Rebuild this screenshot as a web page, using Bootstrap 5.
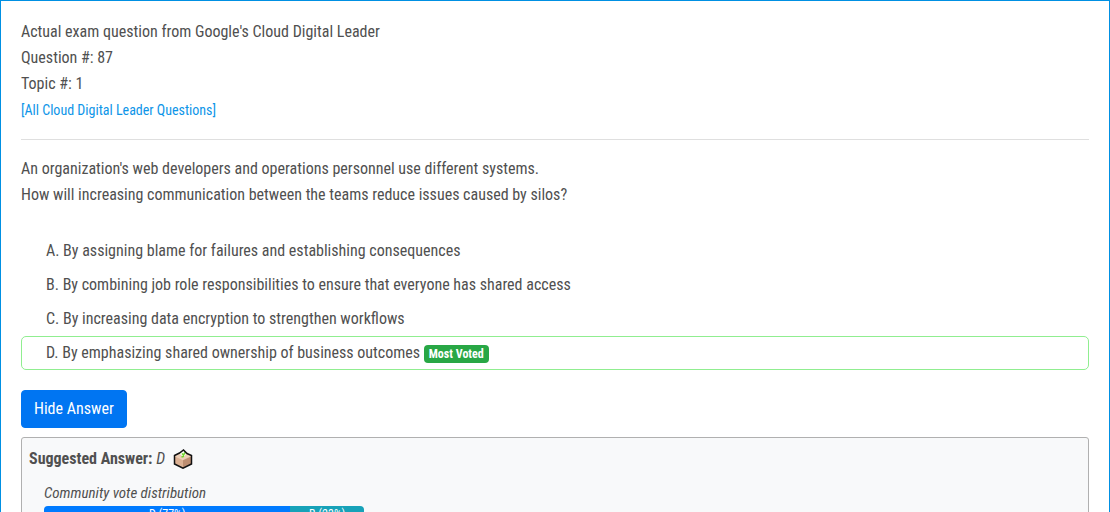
<!DOCTYPE html>
<html lang="en">
<head>
<meta charset="utf-8">
<meta name="viewport" content="width=device-width, initial-scale=1">
<title>Cloud Digital Leader – Question 87</title>
<link href="https://cdn.jsdelivr.net/npm/bootstrap@5.3.0/dist/css/bootstrap.min.css" rel="stylesheet">
<style>
  body { font-family: "Roboto Condensed", "Liberation Sans Narrow", Roboto, sans-serif; font-size: 16px; line-height: 26px; color: #505050; background: #fff; }
  .question-card { border: 1px solid #0090e3; padding: 18px 20px 20px; }
  .all-link { font-size: 14px; color: #0d95e8; text-decoration: none; }
  .divider { border-top: 1px solid #dfdfdf; margin: 16px 0; }
  .choices { margin: 26px 0 20px; }
  .choice { border: 1px solid transparent; border-radius: 5px; padding: 3px 24px; }
  .choice.voted { border-color: #90ee90; }
  .voted-badge { font-size: 12px; line-height: 12px; padding: 3px 5px; background: #28a745; border-radius: 4px; }
  .btn-answer { --bs-btn-bg: #0075f2; --bs-btn-border-color: #0075f2; --bs-btn-color: #fff; --bs-btn-hover-bg: #0069d9; --bs-btn-hover-color: #fff; --bs-btn-border-radius: 4px; line-height: 24px; }
  .answer-box { border: 1px solid #b0b0b0; border-radius: 3px; background: #f8f9fa; padding: 8px 7px; margin-top: 9px; }
  .vote-icon { width: 20px; height: 20px; margin-left: 8px; }
  .votes { width: 320px; margin: 8px 0 16px 15px; }
  .votes-title { font-size: 15px; }
  .vote-bar { --bs-progress-height: 16px; --bs-progress-font-size: 12px; --bs-progress-border-radius: 4px; }
  .bar-d { background: #007bff; }
  .bar-b { background: #17a2b8; }
</style>
</head>
<body>
<main class="question-card">
  <header>
    <div>Actual exam question from Google's Cloud Digital Leader</div>
    <div>Question #: 87</div>
    <div>Topic #: 1</div>
    <div><a class="all-link" href="#">[All Cloud Digital Leader Questions]</a></div>
  </header>
  <div class="divider"></div>
  <p class="mb-0">An organization's web developers and operations personnel use different systems.<br>How will increasing communication between the teams reduce issues caused by silos?</p>
  <ul class="list-unstyled choices">
    <li class="choice">A. By assigning blame for failures and establishing consequences</li>
    <li class="choice">B. By combining job role responsibilities to ensure that everyone has shared access</li>
    <li class="choice">C. By increasing data encryption to strengthen workflows</li>
    <li class="choice voted">D. By emphasizing shared ownership of business outcomes <span class="badge voted-badge">Most Voted</span></li>
  </ul>
  <button type="button" class="btn btn-answer">Hide Answer</button>
  <section class="answer-box">
    <div class="d-flex align-items-center"><strong>Suggested Answer:</strong>&nbsp;<em>D</em>
      <svg class="vote-icon" viewBox="0 0 20 20" aria-hidden="true">
        <path d="M1.500 6.500 6.500 4l4-3L14 4.500l4.500 2V15L10 19.200 1.500 15z" fill="#edceb6"/>
        <path d="M2 7l8 3.800V19l-8-4z" fill="#dcb193"/>
        <path d="M18 7l-8 3.800V19l8-4z" fill="#bd8e71"/>
        <path d="M6.500 4.500l4-3.300 3.300 3.300-3.500 3.800z" fill="#f8fdf0"/>
        <path d="M9 4.500l1.500 1.500L12.500 3M8.500 8l2.500-.8" stroke="#6fd52c" stroke-width="1.500" fill="none"/>
        <path d="M2 7l8 3.800L18 7" fill="none" stroke="#f3dac6" stroke-width=".6"/>
        <path d="M1.500 6.500 6.500 4l4-3L14 4.500l4.500 2V15L10 19.200 1.500 15z" fill="none" stroke="#111" stroke-width="1.500"/>
      </svg>
    </div>
    <div class="votes">
      <div class="votes-title"><em>Community vote distribution</em></div>
      <div class="progress vote-bar">
        <div class="progress-bar bar-d" style="width:77%">D (77%)</div>
        <div class="progress-bar bar-b" style="width:23%">B (23%)</div>
      </div>
    </div>
  </section>
</main>
<script src="https://cdn.jsdelivr.net/npm/bootstrap@5.3.0/dist/js/bootstrap.bundle.min.js"></script>
</body>
</html>
